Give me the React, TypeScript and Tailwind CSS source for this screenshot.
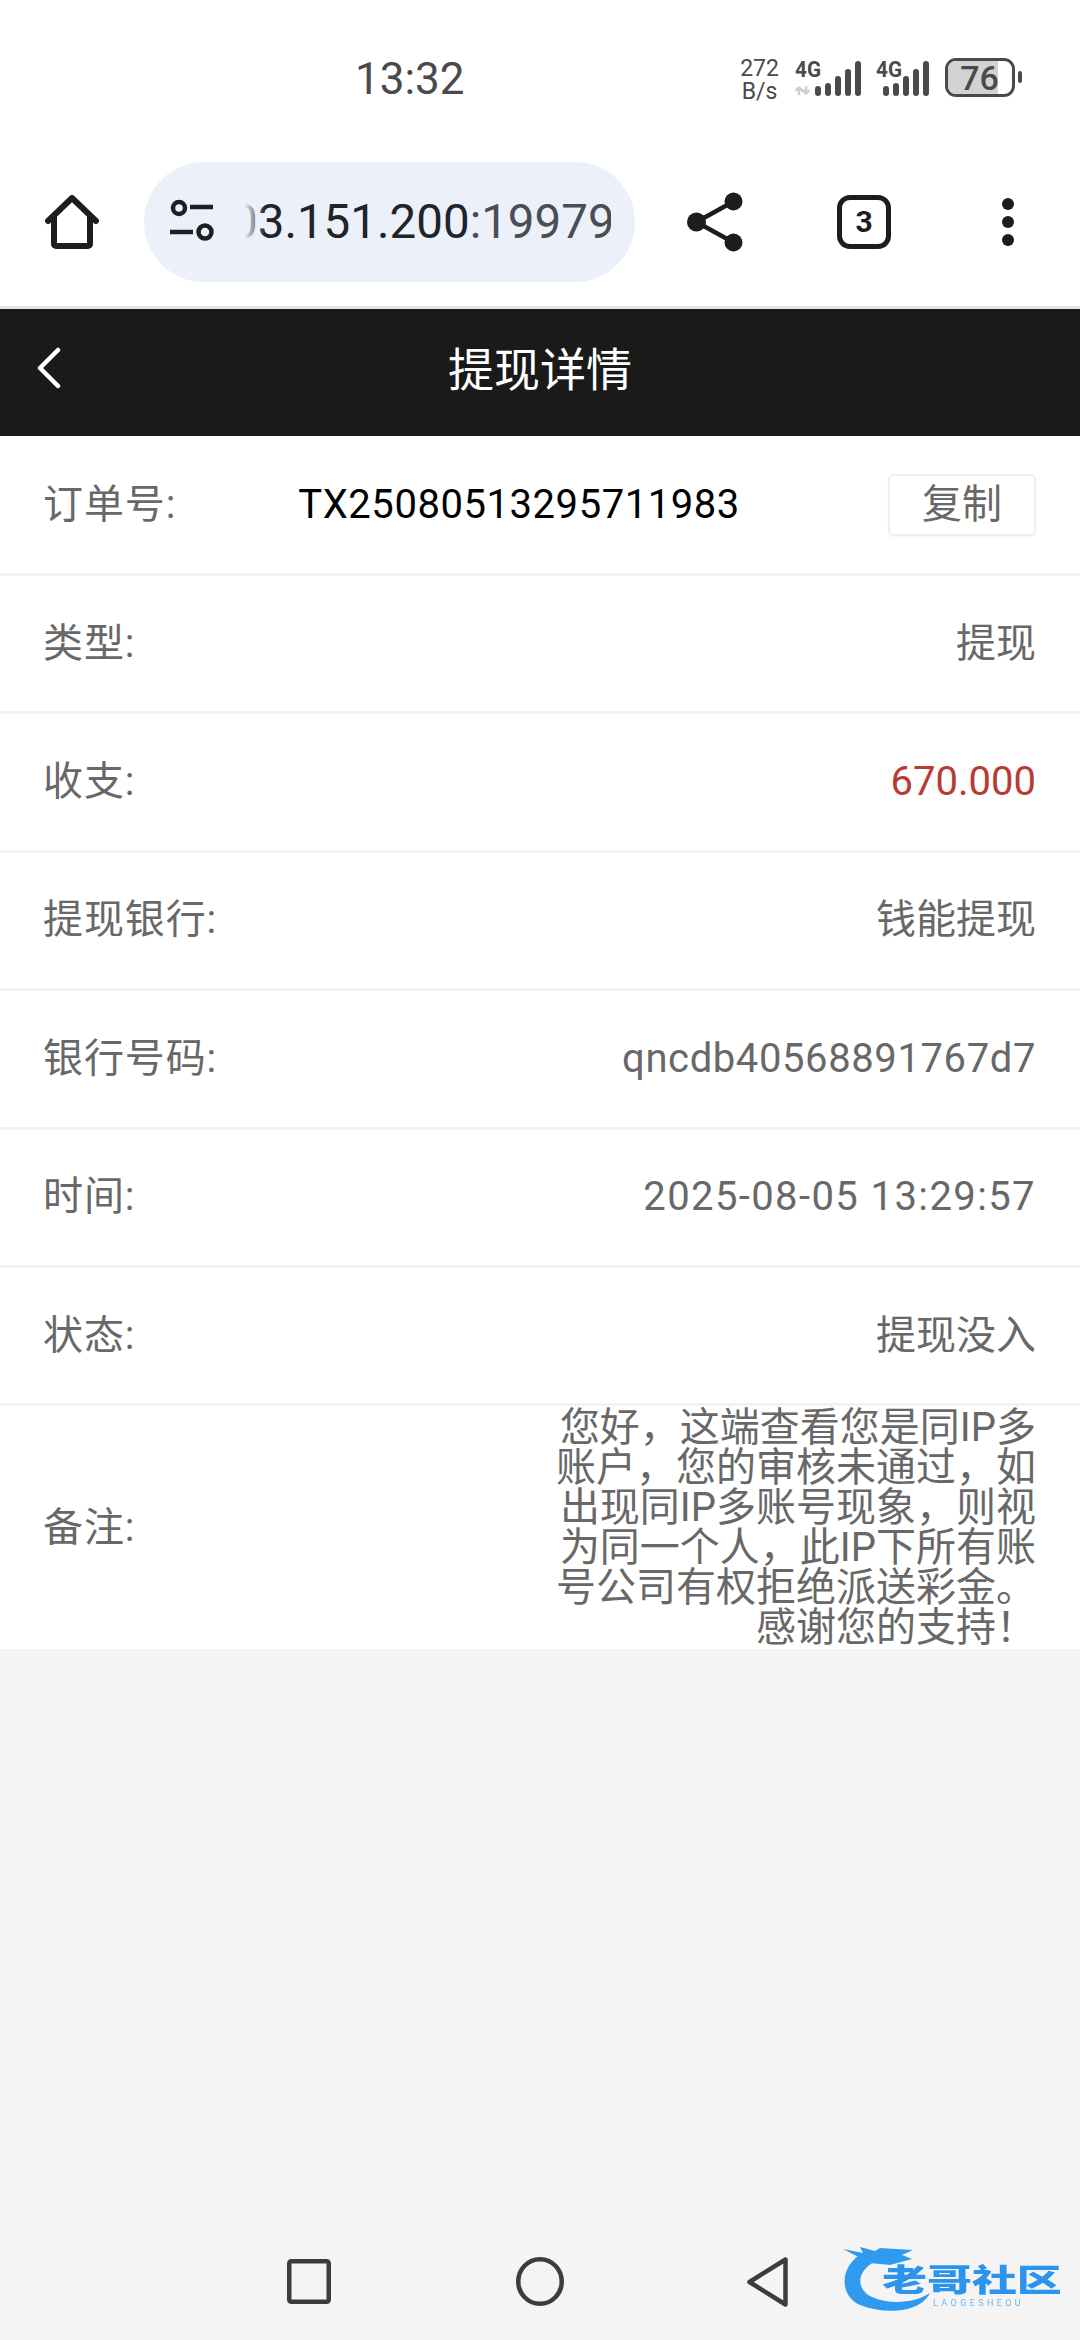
import React from "react";

const font = { fontFamily: '"Roboto", "Noto Sans CJK SC", sans-serif' };

const BAR_TOPS = [86, 83, 76, 69, 61];

const REMARK =
  "您好\uFF0C这端查看您是同IP多账户\uFF0C您的审核未通过\uFF0C如出现同IP多账号现象\uFF0C则视为同一个人\uFF0C此IP下所有账号公司有权拒绝派送彩金。感谢您的支持\uFF01";

function Signal({ arrows }: { arrows?: boolean }) {
  const start = arrows ? 23 : 10;
  const width = start + 46;
  return (
    <svg width={width} height="44" viewBox={`0 0 ${width} 44`} className="block">
      <g transform="translate(0 -57)">
        <text x="0" y="77" fontSize="22" fontWeight="700" fontFamily="Roboto" fill="#4a4a4a" textLength="26" lengthAdjust="spacingAndGlyphs">4G</text>
        {arrows && (
          <path d="M4 95v-8m0 0l-3.5 4m3.5-4l3.5 4M11 86v8m0 0l-3.5-4m3.5 4l3.5-4" stroke="#cfcfcf" strokeWidth="2.5" fill="none" />
        )}
        {BAR_TOPS.map((top, i) => (
          <line key={i} x1={start + i * 10} x2={start + i * 10} y1={top + 3} y2={93} stroke="#4a4a4a" strokeWidth="6" strokeLinecap="round" />
        ))}
      </g>
    </svg>
  );
}

function StatusBar() {
  return (
    <div className="flex h-[162px] items-start bg-white text-[#4a4a4a]">
      <div className="ml-[355px] mt-[53px] text-[44px] leading-[52px]">13:32</div>
      <div className="ml-[275px] mt-[57px] flex items-start">
        <div className="w-[40px] text-center text-[23px] leading-[23px]">
          <div>272</div>
          <div>B/s</div>
        </div>
        <div className="ml-[15px]"><Signal arrows /></div>
        <div className="ml-[12px]"><Signal /></div>
        <div className="relative ml-[13px] mt-px h-[39px] w-[70px] overflow-hidden rounded-[11px] border-[3px] border-[#4a4a4a]">
          <div className="h-full w-[50px] bg-[#d2d2d2]" />
          <div className="absolute inset-0 flex items-center justify-center text-[34px] font-medium leading-none">76</div>
        </div>
        <div className="ml-[3px] mt-[14px] h-[12px] w-[4px] rounded-full bg-[#4a4a4a]" />
      </div>
    </div>
  );
}

function BrowserBar() {
  return (
    <div className="flex h-[147px] items-start border-b-[3px] border-[#e4e4e4] bg-white">
      <svg width="54" height="54" viewBox="0 0 54 54" className="ml-[45px] mt-[33px]" fill="none" stroke="#1d1d1f" strokeWidth="6" strokeLinejoin="round" strokeLinecap="round">
        <path d="M3 26L27 3l24 23M9 21v28a2 2 0 0 0 2 2h32a2 2 0 0 0 2-2V21" />
      </svg>
      <div className="relative ml-[45px] flex h-[120px] w-[491px] items-center overflow-hidden rounded-[60px] bg-[#ebf0f9]">
        <svg width="46" height="46" viewBox="0 0 46 46" className="ml-[25px] shrink-0" fill="none" stroke="#1d1f23" strokeWidth="4.5">
          <circle cx="10" cy="9" r="6" />
          <path d="M21 8h23M1 33h23" />
          <circle cx="36" cy="33" r="6.5" />
        </svg>
        <div className="relative ml-[16px] w-[380px] overflow-hidden whitespace-nowrap text-right text-[47.5px] leading-[56px]">
          <span className="text-[#202328]">03.151.200</span>
          <span className="text-[#4a4e54]">:19979</span>
          <div className="absolute inset-y-0 left-0 w-[34px] bg-gradient-to-r from-[#ebf0f9] from-40% to-transparent" />
        </div>
      </div>
      <svg width="56" height="60" viewBox="0 0 56 60" className="ml-[52px] mt-[30px]" fill="#1d1d1f">
        <circle cx="9.5" cy="30" r="9.5" />
        <circle cx="46.5" cy="9.5" r="9" />
        <circle cx="46.5" cy="50.5" r="9" />
        <path d="M9.5 30L46.5 9.5M9.5 30l37 20.5" stroke="#1d1d1f" strokeWidth="4.5" />
      </svg>
      <div className="ml-[94px] mt-[33px] flex h-[54px] w-[54px] items-center justify-center rounded-[13px] border-[5px] border-[#1d1d1f] text-[30px] font-bold leading-none text-[#1d1d1f]">
        3
      </div>
      <div className="ml-[111px] mt-[36px] flex flex-col gap-[6px]">
        <div className="h-[12px] w-[12px] rounded-full bg-[#1d1d1f]" />
        <div className="h-[12px] w-[12px] rounded-full bg-[#1d1d1f]" />
        <div className="h-[12px] w-[12px] rounded-full bg-[#1d1d1f]" />
      </div>
    </div>
  );
}

function Header() {
  return (
    <div className="relative flex h-[127px] items-center justify-center bg-[#1a1a1a] pb-[4px] text-[46px] text-white">
      <svg width="26" height="42" viewBox="0 0 26 42" className="absolute left-[36px] top-[38px]" fill="none" stroke="#fff" strokeWidth="4.5" strokeLinecap="round" strokeLinejoin="round">
        <path d="M22 3L4 21l18 18" />
      </svg>
      提现详情
    </div>
  );
}

function Row({ label, first, children }: { label: string; first?: boolean; children: React.ReactNode }) {
  return (
    <div className={`flex items-center justify-between border-b-[3px] border-[#f3f3f3] pl-[43px] pr-[44px] text-[40px] leading-[40px] text-[#686868] ${first ? "h-[140px]" : "h-[138.4px]"}`}>
      <span className="tracking-[0.9px]">{label}</span>
      {children}
    </div>
  );
}

function CommunityMark() {
  return (
    <div className="absolute left-[830px] top-[15px] h-[90px] w-[240px] blur-[0.7px]">
      <svg width="110" height="84" viewBox="0 0 110 84" className="absolute left-0 top-0" fill="#2f9bf0">
        <path d="M33 18C10 30 8 60 30 70c25 10 60 8 70-12-15 10-40 12-58 4C26 55 25 35 48 25z" />
        <path d="M13 14l20 4-3-6 15 4 5-3 33 2-11 5 10 4-22 6-20-2z" />
      </svg>
      <div className="absolute left-[52px] top-[30px] origin-left scale-x-[1.45] whitespace-nowrap text-[31px] font-black leading-[32px] text-[#2b95ee]">老哥社区</div>
      <div className="absolute left-[103px] top-[63px] whitespace-nowrap text-[9px] leading-[10px] tracking-[3.4px] text-[#6db6f0]">LAOGESHEOU</div>
    </div>
  );
}

function NavBar() {
  return (
    <div className="relative mt-auto flex h-[120px] items-start justify-center pr-[5px]">
      <svg width="44" height="45" viewBox="0 0 44 45" className="mt-[39px]" fill="none" stroke="#3c3c3c" strokeWidth="4.5" strokeLinejoin="round">
        <rect x="2.25" y="2.25" width="39.5" height="40.5" rx="2" />
      </svg>
      <svg width="48" height="49" viewBox="0 0 48 49" className="ml-[185px] mt-[37px]" fill="none" stroke="#3c3c3c" strokeWidth="4.5">
        <ellipse cx="24" cy="24.5" rx="21.75" ry="22.25" />
      </svg>
      <svg width="41" height="50" viewBox="0 0 41 50" className="ml-[183px] mt-[37px]" fill="none" stroke="#3c3c3c" strokeWidth="4.5" strokeLinejoin="round">
        <path d="M38.5 2.5v45L2.5 25z" />
      </svg>
      <CommunityMark />
    </div>
  );
}

export default function App() {
  return (
    <div lang="zh-CN" style={font} className="flex min-h-[2340px] flex-col bg-[#f4f4f4]">
      <StatusBar />
      <BrowserBar />
      <Header />
      <div className="bg-white">
        <Row label="订单号:" first>
          <span className="ml-[122px] flex-1 tracking-[0.55px] text-black">TX25080513295711983</span>
          <button className="h-[62px] w-[148px] rounded-[5px] border-2 border-[#f0f0f0] text-[40px] leading-none text-[#686868] shadow-[0_1px_2px_rgba(0,0,0,0.04)]">复制</button>
        </Row>
        <Row label="类型:"><span>提现</span></Row>
        <Row label="收支:"><span className="text-[#b93a2f]">670.000</span></Row>
        <Row label="提现银行:"><span>钱能提现</span></Row>
        <Row label="银行号码:"><span className="tracking-[0.6px]">qncdb40568891767d7</span></Row>
        <Row label="时间:"><span className="tracking-[1.4px]">2025-08-05 13:29:57</span></Row>
        <Row label="状态:"><span>提现没入</span></Row>
        <div className="flex h-[243px] items-center justify-between pl-[43px] pr-[44px] text-[40px] leading-[40px] text-[#686868]">
          <span className="tracking-[0.9px]">备注:</span>
          <p className="w-[481px] text-right">{REMARK}</p>
        </div>
      </div>
      <NavBar />
    </div>
  );
}
